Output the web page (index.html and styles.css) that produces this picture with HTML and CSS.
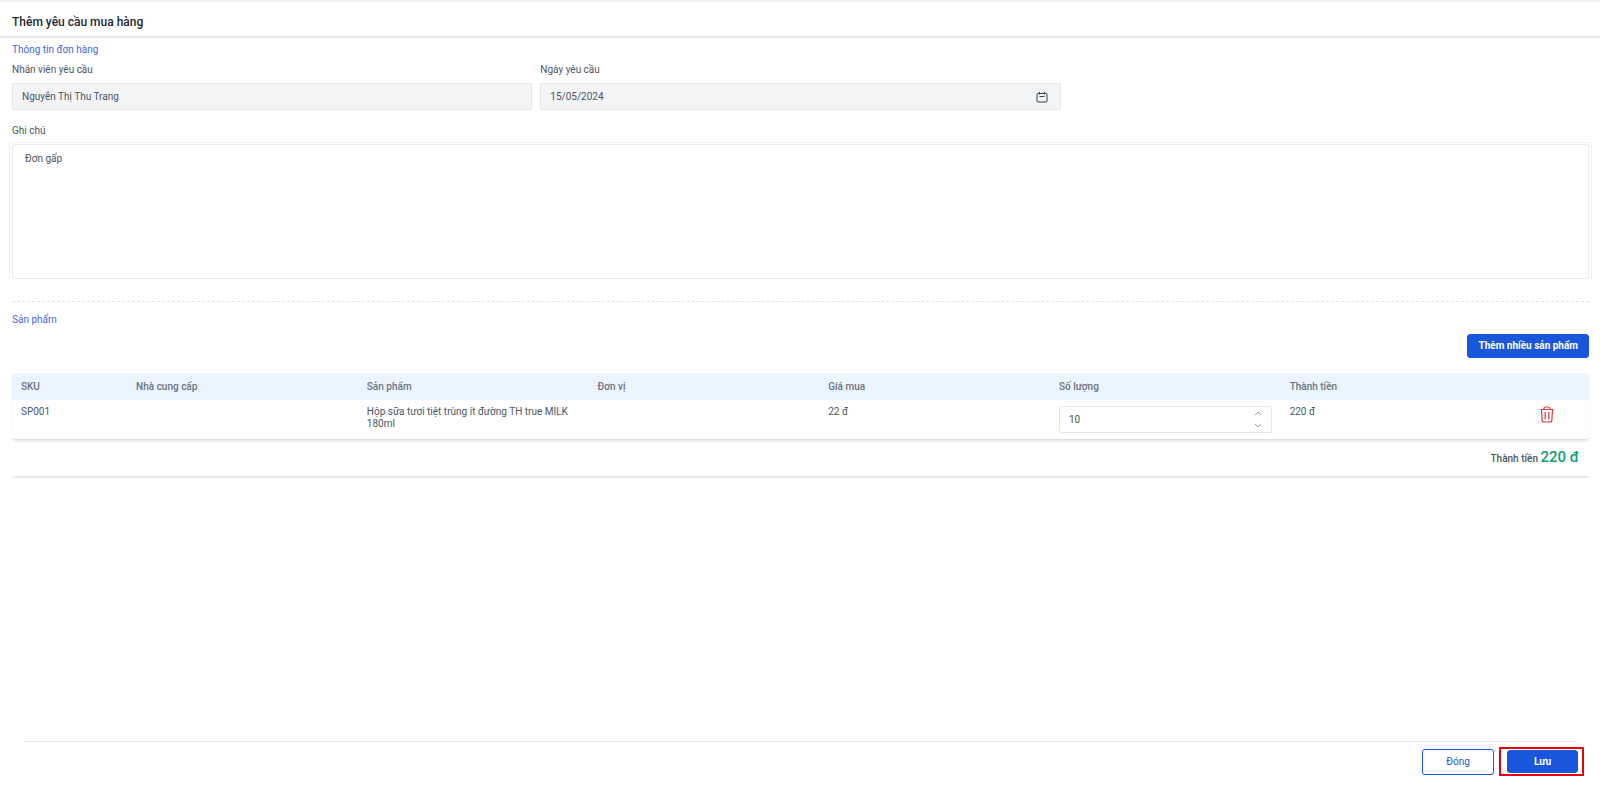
FILE: index.html
```html
<!DOCTYPE html>
<html lang="vi">
<head>
<meta charset="utf-8">
<title>Thêm yêu cầu mua hàng</title>
<link rel="stylesheet" href="styles.css">
</head>
<body>
<form class="page">
  <header class="page-header"><h1 class="page-title">Thêm yêu cầu mua hàng</h1></header>
  <main class="content">
    <section class="order">
      <h2 class="section-title">Thông tin đơn hàng</h2>
      <div class="fields">
        <div class="field">
          <label for="staff">Nhân viên yêu cầu</label>
          <input class="input input-disabled" id="staff" type="text" value="Nguyễn Thị Thu Trang" readonly>
        </div>
        <div class="field">
          <label for="date">Ngày yêu cầu</label>
          <div class="input-wrap input-disabled">
            <input class="input-bare" id="date" type="text" value="15/05/2024" readonly>
            <svg class="icon-calendar" viewBox="0 0 12 12" aria-hidden="true"><path d="M2 2.500h8a1 1 0 0 1 1 1v6.500a1 1 0 0 1-1 1H2a1 1 0 0 1-1-1V3.500a1 1 0 0 1 1-1zM3.500 1v2.500M8.500 1v2.500M3.500 5.500h5"/></svg>
          </div>
        </div>
      </div>
      <div class="field note-field">
        <label for="note">Ghi chú</label>
        <div class="note-frame"><textarea class="note" id="note">Đơn gấp</textarea></div>
      </div>
    </section>
    <section class="products">
      <h2 class="section-title">Sản phẩm</h2>
      <button class="btn btn-primary btn-add" type="button">Thêm nhiều sản phẩm</button>
      <table class="table">
        <colgroup><col class="col-sku"><col class="col-wide" span="6"><col></colgroup>
        <thead>
          <tr><th>SKU</th><th>Nhà cung cấp</th><th>Sản phẩm</th><th>Đơn vị</th><th>Giá mua</th><th>Số lượng</th><th>Thành tiền</th><th></th></tr>
        </thead>
        <tbody>
          <tr>
            <td>SP001</td>
            <td></td>
            <td>Hộp sữa tươi tiệt trùng ít đường TH true MILK 180ml</td>
            <td></td>
            <td>22 đ</td>
            <td>
              <div class="stepper">
                <input class="input-bare" type="text" inputmode="numeric" value="10" aria-label="Số lượng">
                <span class="stepper-buttons">
                  <button type="button" aria-label="Tăng"><svg viewBox="0 0 8 5"><path d="M1 4l3-3 3 3"/></svg></button>
                  <button type="button" aria-label="Giảm"><svg viewBox="0 0 8 5"><path d="M1 1l3 3 3-3"/></svg></button>
                </span>
              </div>
            </td>
            <td>220 đ</td>
            <td class="cell-action">
              <button class="btn-delete" type="button" aria-label="Xóa"><svg viewBox="0 0 14 17"><path d="M.5 3.500h13M4 3.500V2.500A1.500 1.500 0 0 1 5.500 1h3A1.500 1.500 0 0 1 10 2.500v1M1.500 3.500l.6 10.500a2 2 0 0 0 2 2h5.800a2 2 0 0 0 2-2l.6-10.500M5.200 6v7.500M8.800 6v7.500"/></svg></button>
            </td>
          </tr>
        </tbody>
      </table>
      <div class="total">Thành tiền <strong class="total-value">220 đ</strong></div>
    </section>
  </main>
  <footer class="page-footer">
    <button class="btn btn-outline" type="button">Đóng</button>
    <span class="highlight"><button class="btn btn-primary btn-save" type="button">Lưu</button></span>
  </footer>
</form>
</body>
</html>
```
FILE: styles.css
```css
* { box-sizing: border-box; }
body {
  margin: 0;
  background: #fff;
  color: #4b5563;
  font: 10px/12px Roboto, "Noto Sans", sans-serif;
}
input, textarea, button { font: inherit; color: inherit; margin: 0; }
button { cursor: pointer; }
h1, h2 { margin: 0; }

.page {
  display: flex;
  flex-direction: column;
  min-height: 100vh;
  border-top: 2px solid #f5eeee;
}
.page-header { padding: 14px 12px 8px; border-bottom: 2px solid #e5e7eb; }
.page-title { color: #1f2937; font-size: 12px; line-height: 12px; font-weight: 500; }
.content { flex: 1; padding: 6px 11px 0 12px; }
.section-title { color: #4367e0; font-size: 10px; line-height: 12px; font-weight: 400; }

.fields {
  display: grid;
  grid-template-columns: repeat(3, 1fr);
  gap: 8px;
  margin-top: 8px;
}
.field { display: flex; flex-direction: column; gap: 7px; }
.input, .input-wrap {
  width: 100%;
  height: 27px;
  padding: 0 9px;
  border: 1px solid #e5e7eb;
  border-radius: 2px;
}
.input-disabled { background: #f3f4f6; }
.input-wrap { display: flex; align-items: center; padding-right: 12px; }
.input-bare { flex: 1; min-width: 0; padding: 0; border: 0; background: none; outline: 0; }
.icon-calendar { width: 12px; height: 12px; fill: none; stroke: #374151; }

.note-field { margin-top: 15px; gap: 5px; }
.note-frame {
  display: flex;
  margin: 0 -3px;
  padding: 1px 2px 0;
  border: 1px solid #eff0f3;
  border-bottom: 0;
  border-radius: 4px 4px 0 0;
}
.note {
  flex: 1;
  height: 135px;
  padding: 8px 12px;
  border: 1px solid #e8eaed;
  border-radius: 3px;
  outline: 0;
  resize: none;
}

.products {
  display: flex;
  flex-direction: column;
  margin-top: 22px;
  padding-top: 12px;
  border-top: 1px dashed #e0e2e6;
}
.btn { border: 1px solid #1a56db; border-radius: 3px; line-height: 12px; }
.btn-primary { background: #1a56db; color: #fff; font-weight: 700; }
.btn-add { align-self: flex-end; height: 24px; margin-top: 8px; padding: 0 10px; }

.table {
  width: 100%;
  margin-top: 15px;
  table-layout: fixed;
  border-collapse: separate;
  border-spacing: 0;
  border-radius: 4px;
  box-shadow: 0 3px 3px -1px #00000026;
}
.col-sku { width: 7.3%; }
.col-wide { width: 14.63%; }
.table th { height: 27px; padding: 0 9px; background: #ebf5ff; color: #6b7280; font-weight: 500; text-align: left; }
.table th:first-child { border-top-left-radius: 4px; }
.table th:last-child { border-top-right-radius: 4px; }
.table td { height: 39px; padding: 6px 9px; vertical-align: top; }
.table .cell-action { padding-right: 16px; }

.stepper {
  display: flex;
  align-items: center;
  height: 27px;
  padding: 0 9px;
  border: 1px solid #e5e7eb;
  border-radius: 2px;
}
.stepper-buttons { display: flex; flex-direction: column; gap: 7px; }
.stepper-buttons button { display: flex; padding: 0; border: 0; background: none; }
.stepper-buttons svg { width: 8px; height: 5px; fill: none; stroke: #9ca3af; }
.btn-delete { display: flex; margin: 0 auto; padding: 0; border: 0; background: none; }
.btn-delete svg { width: 14px; height: 17px; fill: none; stroke: #d83a3a; stroke-width: 1.2; }

.total {
  padding: 8px 10px 7px;
  border-bottom: 2px solid #e7e7e9;
  border-radius: 4px;
  line-height: 20px;
  font-weight: 500;
  text-align: right;
}
.total-value { color: #0e9f6e; font-size: 15px; font-weight: 500; }

.page-footer {
  display: flex;
  align-items: center;
  justify-content: flex-end;
  gap: 5px;
  margin: 0 24px;
  padding: 5px 0 14px;
  border-top: 1px solid #e5e7eb;
}
.btn-outline { width: 72px; height: 26px; background: #fff; color: #1a56db; }
.highlight { display: flex; margin-right: -8px; padding: 1px 4px 1px 6px; border: 2px solid #e60012; }
.btn-save { width: 71px; height: 23px; }
```
